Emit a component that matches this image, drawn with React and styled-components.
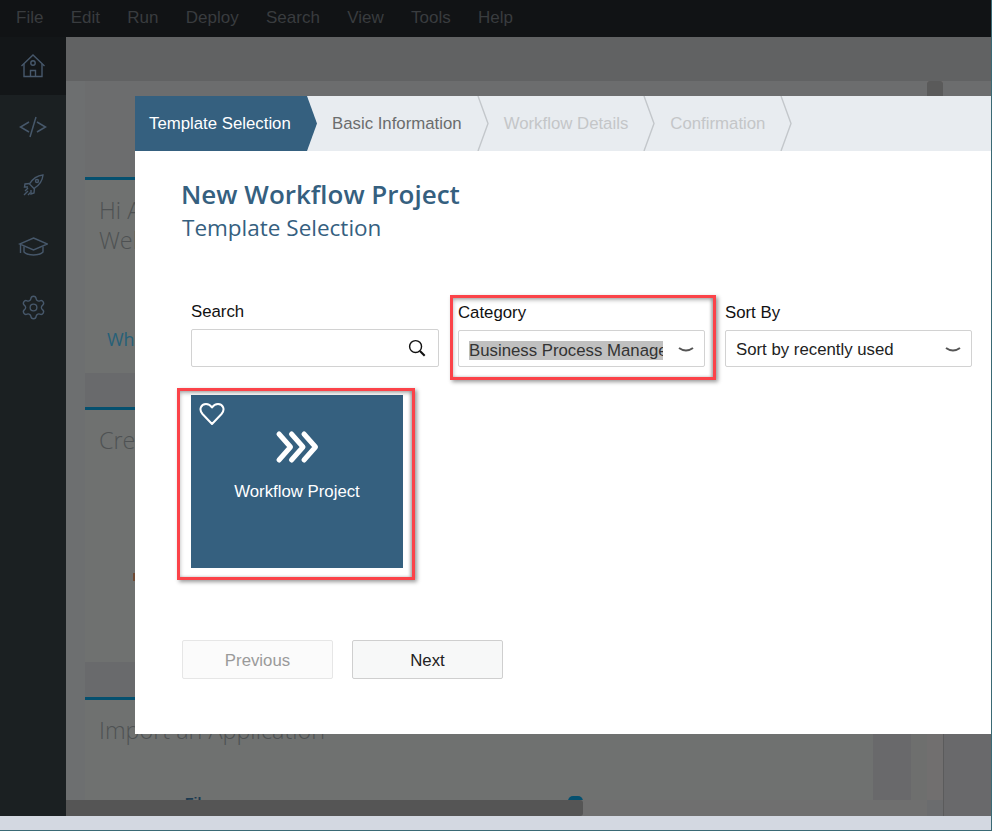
import React from "react";
import styled, { createGlobalStyle } from "styled-components";
import { Settings } from "lucide-react";

const Global = createGlobalStyle`
  html, body { margin: 0; padding: 0; background: #111315; }
  * { box-sizing: border-box; }
  body { font-family: "Liberation Sans", Arial, sans-serif; font-size: 16.8px; }
`;

const Page = styled.div`
  position: relative; width: 992px; height: 831px; overflow: hidden;
  display: flex; flex-direction: column; border-right: 1px solid #3a6a75;
`;
const MenuBar = styled.div`
  height: 37px; flex: none; background: #111315; display: flex; align-items: center;
  gap: 27.3px; padding: 0 0 1px 16px; color: #393c3f; font-size: 17px;
`;
const Main = styled.div`flex: 1; min-height: 0; display: flex;`;
const Sidebar = styled.nav`width: 66px; flex: none; background: #1b2022; display: flex; flex-direction: column;`;
const NavItem = styled.div`
  height: ${p => (p.$home ? "58px" : "60px")}; margin-bottom: ${p => (p.$home ? "2px" : "0")};
  background: ${p => (p.$home ? "#131618" : "transparent")};
  display: flex; align-items: center; justify-content: center; color: #47586b;
  svg { display: block; }
`;
const Workspace = styled.div`flex: 1; min-width: 0; display: flex; flex-direction: column; background: #6c6d6e;`;
const TopStrip = styled.div`height: 44px; flex: none; background: #616263;`;
const WorkBody = styled.div`flex: 1; min-height: 0; display: flex;`;
const Scroller = styled.div`width: 877px; flex: none; display: flex; flex-direction: column;`;
const ScrollMain = styled.div`flex: 1; min-height: 0; display: flex; overflow: hidden;`;
const LeftMargin = styled.div`width: 19px; flex: none; background: #6d6f70;`;
const Cards = styled.div`
  width: 788px; flex: none; display: flex; flex-direction: column; overflow: hidden;
  padding-top: 96px; background: linear-gradient(#6c6d6e 0 96px, #696a6c 96px);
`;
const Card = styled.section`
  flex: none; height: ${p => p.$h}px; margin-bottom: ${p => p.$mb || 0}px;
  border-top: 3px solid #05506f; background: #6f7170; padding: 15px 0 0 14px;
  color: #4e5153; font: 300 23.4px/30px "Open Sans", sans-serif;
`;
const Line = styled.div`white-space: nowrap;`;
const CardLink = styled.div`
  margin: ${p => p.$top}px 0 0 8px; color: #266078; font: 400 18px/24px "Open Sans", sans-serif;
`;
const Marker = styled.div`width: 5px; height: 8px; margin: 118px 0 0 34px; background: #704a34;`;
const ImportRow = styled.div`display: flex; align-items: flex-start; margin-top: 49px; height: 20px;`;
const FileLabel = styled.span`
  margin-left: 86px; width: 383px; color: #1d3b50; font: 700 14px/18px "Liberation Sans", sans-serif;
`;
const ImportBtn = styled.span`width: 15px; height: 20px; margin-top: 2px; border-radius: 5px 5px 0 0; background: #05506f;`;
const Gutter = styled.div`width: 38px; flex: none; margin-top: 96px; background: #69696b;`;
const Gap = styled.div`width: 16px; flex: none; margin-top: 96px; background: #6e6f6e;`;
const VBar = styled.div`width: 16px; flex: none; background: #716f6f;`;
const VThumb = styled.div`height: 120px; background: #5a5a5a; border-radius: 3px 3px 0 0;`;
const HBar = styled.div`height: 16px; flex: none; display: flex; background: #6f6f6f;`;
const HThumb = styled.div`width: 517px; background: #555555; border-radius: 0 3px 3px 0;`;
const HFill = styled.div`flex: 1;`;
const HCorner = styled.div`width: 16px; background: #6b6c6e;`;
const RightPane = styled.div`flex: 1; margin-top: 15px; background: #69696b; border-left: 1px solid #5b5b5c;`;
const StatusBar = styled.div`height: 15px; flex: none; background: #d3d8e1; border-bottom: 1px solid #3a6a75;`;

const Modal = styled.div`
  position: absolute; left: 135px; top: 96px; width: 856px; height: 638px; background: #fff;
  display: flex; flex-direction: column;
`;
const Stepper = styled.div`height: 55px; flex: none; background: #e8ecf0; display: flex; align-items: center;`;
const ActiveStep = styled.div`
  width: 182px; height: 100%; flex: none; background: #35607f; color: #fff;
  display: flex; align-items: center; padding-left: 14px; white-space: nowrap;
  clip-path: polygon(0 0, 172px 0, 182px 50%, 172px 100%, 0 100%);
`;
const Step = styled.div`
  height: 100%; display: flex; align-items: center; gap: 15px; padding-left: 15px;
  white-space: nowrap; color: ${p => (p.$muted ? "#c4c6c8" : "#6b6c6d")};
  svg { display: block; flex: none; }
`;
const Body = styled.div`flex: 1; padding: 26px 0 0 46px; display: flex; flex-direction: column;`;
const Title = styled.h1`margin: 0; color: #35607f; font: 600 26px/34px "Open Sans", sans-serif;`;
const Subtitle = styled.h2`margin: 1px 0 0 1px; color: #35607f; font: 400 22.5px/32px "Open Sans", sans-serif;`;
const Filters = styled.div`display: flex; gap: 19px; margin: 58px 0 0 10px; align-items: flex-end;`;
const Field = styled.div`position: relative; width: ${p => p.$w || 248}px; margin-left: ${p => p.$ml || 0}px;`;
const Label = styled.div`color: #111; line-height: 20px; margin-bottom: 7px;`;
const Control = styled.div`
  height: ${p => p.$h}px; border: 1px solid #d2d2d2; border-radius: 2px; background: #fff;
  display: flex; align-items: center; justify-content: space-between;
  padding: ${p => p.$pt || 0}px ${p => p.$pr || 10}px 0 10px;
  color: #222;
  svg { display: block; flex: none; }
`;
const SelectedValue = styled.span`
  display: block; width: 194px; height: 19px; line-height: 19px; background: #c0c0c0; overflow: hidden;
  white-space: nowrap; color: #333;
`;
const Highlight = styled.div`
  position: absolute; left: ${p => p.$l}px; top: ${p => p.$t}px; right: ${p => p.$r}px; bottom: ${p => p.$b}px;
  border: 3px solid #fb4349; pointer-events: none;
  box-shadow: 2px 2px 4px rgba(0,0,0,.4), inset 0 2px 4px rgba(0,0,0,.3), inset -2px 0 3px rgba(0,0,0,.2);
`;
const Tiles = styled.div`margin: 28px 0 0 10px;`;
const Tile = styled.div`
  position: relative; width: 212px; height: 173px; background: #35607f; color: #fff;
  display: flex; flex-direction: column; align-items: center; padding-top: 35px;
  svg { display: block; }
`;
const HeartMark = styled.span`position: absolute; left: 8px; top: 7px;`;
const TileLabel = styled.div`margin-top: 18px; line-height: 20px;`;
const Buttons = styled.div`display: flex; gap: 19px; margin: 72px 0 0 1px;`;
const Btn = styled.button`
  width: 151px; height: 39px; border-radius: 2px; font: 400 16.8px "Liberation Sans", sans-serif; padding: 2px 0 0;
  background: ${p => (p.disabled ? "#fbfbfb" : "#f7f8f8")};
  border: 1px solid ${p => (p.disabled ? "#e6e6e6" : "#cfcfcf")};
  color: ${p => (p.disabled ? "#9a9a9a" : "#222")};
`;

const Chevron = () => (
  <svg width="12" height="55" viewBox="0 0 12 55" fill="none" stroke="#c3c7cb" strokeWidth="1.4">
    <path d="M1 0 L11 27.5 L1 55" />
  </svg>
);
const SelectArrow = () => (
  <svg width="16" height="8" viewBox="0 0 16 8" fill="none" stroke="#555" strokeWidth="2">
    <path d="M1 2 Q8 7 15 2" />
  </svg>
);
const SearchGlyph = () => (
  <svg width="18" height="18" viewBox="0 0 19 19" fill="none" stroke="#111">
    <circle cx="8" cy="8" r="6.3" strokeWidth="1.5" />
    <path d="M12.6 12.6 L17.6 17.6" strokeWidth="2.2" />
  </svg>
);
const HomeIcon = () => (
  <svg width="30" height="30" viewBox="0 0 30 30" fill="none" stroke="currentColor" strokeWidth="1.4">
    <path d="M3.5 15 L15 4 L26.5 15" />
    <path d="M6 13 V25.5 H24 V13" />
    <path d="M12.5 25 V19.5 H17.5 V25" />
    <circle cx="15" cy="12" r="2.2" />
  </svg>
);
const CodeIcon = () => (
  <svg width="30" height="30" viewBox="0 0 30 30" fill="none" stroke="currentColor" strokeWidth="1.5">
    <path d="M11 10 L2.5 15 L11 20" />
    <path d="M18 5 L12 25" />
    <path d="M19 10 L27.5 15 L19 20" />
  </svg>
);
const RocketIcon = () => (
  <svg width="30" height="30" viewBox="0 0 30 30" fill="none" stroke="currentColor" strokeWidth="1.4" style={{ marginTop: -4 }}>
    <path d="M25 5 C19.5 5.5 14.5 9 11.5 14 L16 18.5 C21 15.5 24.5 10.5 25 5 Z" />
    <path d="M12 13.5 L7 14 L6.5 17 L10 17" />
    <path d="M16.5 18 L16 23 L13 24 L13 20" />
    <circle cx="19" cy="11" r="1.5" />
    <path d="M7 21 L10 18 M6 25 L10 21 M10 25 L12.5 22.5" />
  </svg>
);
const CapIcon = () => (
  <svg width="30" height="30" viewBox="0 0 30 30" fill="none" stroke="currentColor" strokeWidth="1.4">
    <path d="M15.5 6 L29.5 12 L15.5 18 L1.5 12 Z" />
    <path d="M6 14.5 V20 C10 24 21 24 25 20 V14.5" />
    <path d="M2.5 12.5 V21" />
  </svg>
);
const FlowIcon = () => (
  <svg width="44" height="34" viewBox="0 0 44 34" fill="none" stroke="#fff" strokeWidth="5" strokeLinecap="round" strokeLinejoin="round">
    <path d="M4 4 L15.5 17 L4 30" />
    <path d="M16.5 4 L28 17 L16.5 30" />
    <path d="M29 4 L40.5 17 L29 30" />
  </svg>
);
const HeartIcon = () => (
  <svg width="26" height="24" viewBox="0 0 26 24" fill="none" stroke="#fff" strokeWidth="2" strokeLinejoin="round">
    <path d="M13 22 L3.5 12 C-0.5 7.5 2 2 7 2 C10 2 12 4 13 5.5 C14 4 16 2 19 2 C24 2 26.5 7.5 22.5 12 Z" />
  </svg>
);

const menus = ["File", "Edit", "Run", "Deploy", "Search", "View", "Tools", "Help"];

export default function App() {
  return (
    <>
      <Global />
      <Page>
        <MenuBar>{menus.map(m => <span key={m}>{m}</span>)}</MenuBar>
        <Main>
          <Sidebar>
            <NavItem $home><HomeIcon /></NavItem>
            <NavItem><CodeIcon /></NavItem>
            <NavItem><RocketIcon /></NavItem>
            <NavItem><CapIcon /></NavItem>
            <NavItem><Settings size={27} strokeWidth={1.2} /></NavItem>
          </Sidebar>
          <Workspace>
            <TopStrip />
            <WorkBody>
              <Scroller>
                <ScrollMain>
                  <LeftMargin />
                  <Cards>
                    <Card $h={196} $mb={34}>
                      <Line>Hi Admin,</Line>
                      <Line>Welcome to SAP Web IDE</Line>
                      <CardLink $top={72}>What's New</CardLink>
                    </Card>
                    <Card $h={255} $mb={35}>
                      <Line>Create a Project</Line>
                      <Marker />
                    </Card>
                    <Card $h={120}>
                      <Line>Import an Application</Line>
                      <ImportRow>
                        <FileLabel>File</FileLabel>
                        <ImportBtn />
                      </ImportRow>
                    </Card>
                  </Cards>
                  <Gutter />
                  <Gap />
                  <VBar><VThumb /></VBar>
                </ScrollMain>
                <HBar>
                  <HThumb />
                  <HFill />
                  <HCorner />
                </HBar>
              </Scroller>
              <RightPane />
            </WorkBody>
          </Workspace>
        </Main>
        <StatusBar />

        <Modal>
          <Stepper>
            <ActiveStep>Template Selection</ActiveStep>
            <Step>Basic Information<Chevron /></Step>
            <Step $muted>Workflow Details<Chevron /></Step>
            <Step $muted>Confirmation<Chevron /></Step>
          </Stepper>
          <Body>
            <Title>New Workflow Project</Title>
            <Subtitle>Template Selection</Subtitle>
            <Filters>
              <Field>
                <Label>Search</Label>
                <Control $h={38} $pr={12}><span /><SearchGlyph /></Control>
              </Field>
              <Field $w={247}>
                <Label>Category</Label>
                <Control $h={37} $pt={3}>
                  <SelectedValue>Business Process Management</SelectedValue>
                  <SelectArrow />
                </Control>
                <Highlight $l={-8} $t={-8} $r={-11} $b={-13} />
              </Field>
              <Field $w={247} $ml={1}>
                <Label>Sort By</Label>
                <Control $h={37} $pt={3}>
                  <span>Sort by recently used</span>
                  <SelectArrow />
                </Control>
              </Field>
            </Filters>
            <Tiles>
              <Field>
                <Tile>
                  <HeartMark><HeartIcon /></HeartMark>
                  <FlowIcon />
                  <TileLabel>Workflow Project</TileLabel>
                </Tile>
                <Highlight $l={-14} $t={-7} $r={24} $b={-12} />
              </Field>
            </Tiles>
            <Buttons>
              <Btn disabled>Previous</Btn>
              <Btn>Next</Btn>
            </Buttons>
          </Body>
        </Modal>
      </Page>
    </>
  );
}
